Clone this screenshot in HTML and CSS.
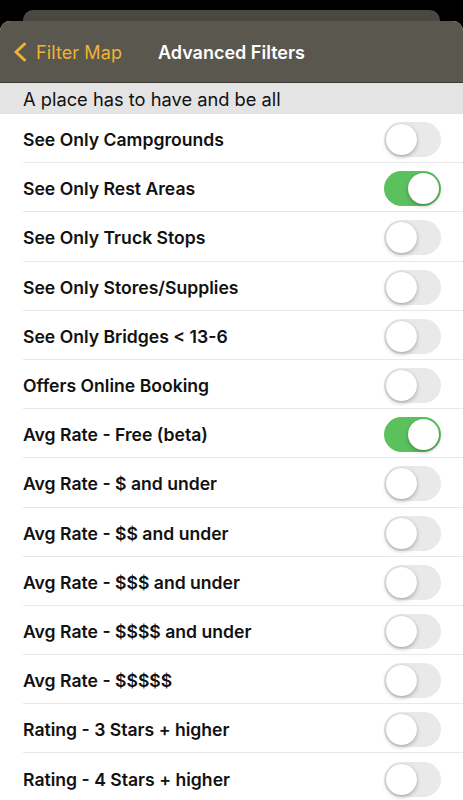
FILE: index.html
```html
<!DOCTYPE html>
<html>
<head>
<meta charset="utf-8">
<link rel="stylesheet" href="styles.css">
</head>
<body>
<div class="screen">
  <div class="back-card"></div>
  <div class="sheet">
    <div class="nav">
      <div class="nav-back">
        <svg class="chev" width="14" height="20" viewBox="0 0 14 20"><path d="M11.5 2 L3 10 L11.5 18" fill="none" stroke="#f2b233" stroke-width="3" stroke-linecap="round" stroke-linejoin="round"/></svg>
        <span>Filter Map</span>
      </div>
      <div class="nav-title">Advanced Filters</div>
      <div></div>
    </div>
    <div class="section">A place has to have and be all</div>
    <ul class="list">
      <li class="row"><span class="label">See Only Campgrounds</span><span class="toggle"></span></li>
      <li class="row"><span class="label">See Only Rest Areas</span><span class="toggle on"></span></li>
      <li class="row"><span class="label">See Only Truck Stops</span><span class="toggle"></span></li>
      <li class="row"><span class="label">See Only Stores/Supplies</span><span class="toggle"></span></li>
      <li class="row"><span class="label">See Only Bridges &lt; 13-6</span><span class="toggle"></span></li>
      <li class="row"><span class="label">Offers Online Booking</span><span class="toggle"></span></li>
      <li class="row"><span class="label">Avg Rate - Free (beta)</span><span class="toggle on"></span></li>
      <li class="row"><span class="label">Avg Rate - $ and under</span><span class="toggle"></span></li>
      <li class="row"><span class="label">Avg Rate - $$ and under</span><span class="toggle"></span></li>
      <li class="row"><span class="label">Avg Rate - $$$ and under</span><span class="toggle"></span></li>
      <li class="row"><span class="label">Avg Rate - $$$$ and under</span><span class="toggle"></span></li>
      <li class="row"><span class="label">Avg Rate - $$$$$</span><span class="toggle"></span></li>
      <li class="row"><span class="label">Rating - 3 Stars + higher</span><span class="toggle"></span></li>
      <li class="row"><span class="label">Rating - 4 Stars + higher</span><span class="toggle"></span></li>
    </ul>
  </div>
</div>
</body>
</html>
```

FILE: styles.css
```css
html, body {
  margin: 0;
  padding: 0;
  background: #000;
  font-family: Inter, "Liberation Sans", Arial, sans-serif;
}
.screen {
  width: 463px;
  height: 800px;
  overflow: hidden;
  padding-top: 10px;
  box-sizing: border-box;
}
.back-card {
  height: 11px;
  margin: 0 23px;
  background: #4a4842;
  border-radius: 10px 10px 0 0;
}
.sheet {
  background: #fff;
  border-radius: 10px 10px 0 0;
  overflow: hidden;
}
.nav {
  height: 62px;
  background: #5a574f;
  border-bottom: 1px solid #3e3c37;
  display: grid;
  grid-template-columns: 1fr auto 1fr;
  align-items: center;
  padding-top: 1px;
  box-sizing: border-box;
}
.nav-back {
  display: flex;
  align-items: center;
  gap: 9px;
  padding-left: 13px;
  color: #f2b233;
  font-size: 18px;
  letter-spacing: 0.1px;
}
.chev {
  display: block;
}
.nav-title {
  color: #fff;
  font-weight: 600;
  font-size: 18px;
}
.section {
  height: 31px;
  background: #e4e4e4;
  color: #111;
  font-size: 18.3px;
  line-height: 31px;
  padding-left: 23px;
  padding-top: 1px;
  box-sizing: border-box;
}
.list {
  list-style: none;
  margin: 0;
  padding: 0 0 0 23px;
}
.row {
  height: 49.2px;
  display: flex;
  align-items: center;
  justify-content: space-between;
  padding-right: 22px;
  border-bottom: 1px solid #e8e8e8;
  box-sizing: border-box;
}
.label {
  font-size: 17.6px;
  font-weight: 600;
  color: #111;
  padding-top: 3px;
}
.toggle {
  position: relative;
  width: 57px;
  height: 35px;
  border-radius: 18px;
  background: #e9e9ea;
  margin-top: 3px;
}
.toggle::after {
  content: "";
  position: absolute;
  left: 2px;
  top: 2px;
  width: 31px;
  height: 31px;
  border-radius: 50%;
  background: #fff;
  box-shadow: 0 2px 4px rgba(0,0,0,0.25), 0 0 1px rgba(0,0,0,0.2);
}
.toggle.on {
  background: #5bc15d;
}
.toggle.on::after {
  left: 24px;
}
```
